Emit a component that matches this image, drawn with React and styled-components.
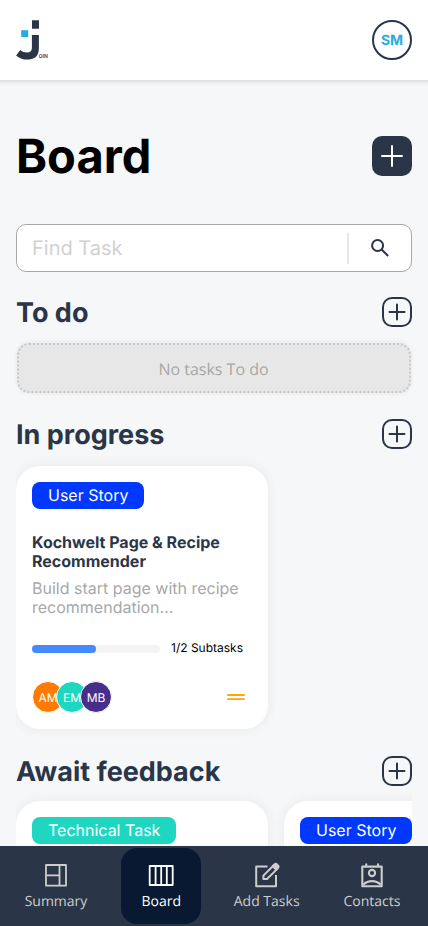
import React from "react";
import styled, { createGlobalStyle } from "styled-components";

const GlobalStyle = createGlobalStyle`
  *, *::before, *::after { box-sizing: border-box; }
  body { margin: 0; background: #f6f7f8; font-family: Inter, sans-serif; text-rendering: geometricPrecision; overflow: hidden; }
  h1, h2, h3, p { margin: 0; }
  button, input { font: inherit; text-rendering: inherit; }
`;

const navy = "#2a3647";

const Page = styled.div`
  display: flex;
  flex-direction: column;
  height: 100vh;
  background: #f6f7f8;
`;

const Header = styled.header`
  display: flex;
  flex: none;
  align-items: center;
  justify-content: space-between;
  height: 80px;
  padding: 0 16px;
  background: #fff;
  box-shadow: 0 0 4px 2px rgba(0, 0, 0, 0.12);
  z-index: 1;
`;

const Profile = styled.button`
  display: flex;
  align-items: center;
  justify-content: center;
  width: 40px;
  height: 40px;
  padding: 0;
  border: 2px solid ${navy};
  border-radius: 50%;
  background: #fff;
  color: #29abe2;
  font-size: 14px;
  font-weight: 700;
`;

const Main = styled.main`
  flex: 1;
  min-height: 0;
  padding: 48px 16px 0;
  overflow: hidden;
`;

const TitleRow = styled.div`
  display: flex;
  align-items: center;
  justify-content: space-between;
  height: 56px;
`;

const Title = styled.h1`
  padding-top: 2px;
  font-size: 47px;
  font-weight: 700;
  line-height: 56px;
`;

const AddButton = styled.button`
  display: flex;
  width: 40px;
  height: 40px;
  padding: 0;
  border: 0;
  border-radius: 10px;
  background: ${navy};
  color: #fff;
`;

const Search = styled.div`
  display: flex;
  align-items: center;
  height: 48px;
  margin-top: 40px;
  border: 1px solid #a8a8a8;
  border-radius: 10px;
  background: #fff;
`;

const SearchInput = styled.input`
  flex: 1;
  min-width: 0;
  height: 44px;
  padding: 0 15px;
  border: 0;
  outline: 0;
  background: transparent;
  font-size: 20px;
  &::placeholder { color: #d1d1d1; opacity: 1; }
`;

const SearchAction = styled.button`
  display: flex;
  align-items: center;
  justify-content: center;
  width: 64px;
  height: 31px;
  padding: 0;
  border: 0;
  border-left: 2px solid #e7e7e7;
  background: transparent;
`;

const ColumnHeader = styled.div`
  display: flex;
  align-items: center;
  justify-content: space-between;
  height: 30px;
  margin-top: ${({ $gap }) => $gap}px;
`;

const ColumnTitle = styled.h2`
  padding-top: 2px;
  color: ${navy};
  font-size: 27px;
  font-weight: 700;
  line-height: 34px;
`;

const ColumnAdd = styled.button`
  display: flex;
  width: 30px;
  height: 30px;
  padding: 0;
  border: 0;
  background: transparent;
`;

const Empty = styled.p`
  height: 50px;
  margin: 16px 1px 0;
  padding-right: 1px;
  border: 2px dotted #c9c9c9;
  border-radius: 12px;
  background: #e7e7e7;
  box-shadow: 0 0 4px rgba(0, 0, 0, 0.08);
  color: #a8a8a8;
  font: 16px/48px "Open Sans", sans-serif;
  text-align: center;
`;

const CardList = styled.div`
  display: flex;
  gap: 16px;
  padding: ${({ $top }) => $top}px 0 10px;
  overflow: hidden;
`;

const Card = styled.article`
  display: flex;
  flex: none;
  flex-direction: column;
  align-items: flex-start;
  width: 252px;
  height: 263px;
  padding: 16px;
  border-radius: 24px;
  background: #fff;
  box-shadow: 0 0 10px 3px rgba(0, 0, 0, 0.04);
`;

const Badge = styled.span`
  height: 27px;
  padding: 0 16px;
  border-radius: 8px;
  background: ${({ $color }) => $color};
  color: #fff;
  font-size: 16px;
  line-height: 27px;
  white-space: nowrap;
`;

const CardTitle = styled.h3`
  margin-top: 24px;
  color: ${navy};
  font-size: 16px;
  font-weight: 700;
  line-height: 19px;
`;

const Description = styled.p`
  margin-top: 8px;
  color: #a8a8a8;
  font-size: 16px;
  line-height: 19px;
`;

const Progress = styled.div`
  display: flex;
  align-items: center;
  gap: 11px;
  height: 16px;
  margin-top: 22px;
  font-size: 12px;
`;

const Track = styled.div`
  width: 128px;
  height: 8px;
  margin-top: 3px;
  border-radius: 8px;
  background: #f4f4f4;
`;

const Fill = styled.div`
  height: 8px;
  border-radius: 8px;
  background: #4589ff;
`;

const CardFooter = styled.div`
  display: flex;
  align-items: center;
  justify-content: space-between;
  width: 100%;
  margin-top: 26px;
  padding-right: 7px;
`;

const Avatars = styled.div`
  display: flex;
`;

const Avatar = styled.span`
  display: flex;
  align-items: center;
  justify-content: center;
  width: 32px;
  height: 32px;
  border: 1px solid #fff;
  border-radius: 50%;
  background: ${({ $color }) => $color};
  color: #fff;
  font-size: 12px;
  & + & { margin-left: -8px; }
`;

const Nav = styled.nav`
  display: flex;
  flex: none;
  align-items: center;
  justify-content: space-between;
  height: 80px;
  padding: 0 16px;
  background: ${navy};
  z-index: 1;
`;

const NavItem = styled.a`
  display: flex;
  flex-direction: column;
  align-items: center;
  width: 80px;
  height: 76px;
  padding-top: 12px;
  border-radius: 16px;
  background: ${({ $active }) => ($active ? "#091931" : "transparent")};
  color: ${({ $active }) => ($active ? "#fff" : "#cdcdcd")};
  font: 14px/19px "Open Sans", sans-serif;
  white-space: nowrap;
`;

const LogoSvg = styled.svg`
  overflow: visible;
`;

const Logo = () => (
  <LogoSvg width="32" height="40" viewBox="0 0 32 40" aria-label="Join">
    <path fill={navy} d="M16 .2h7v8.5h-7zM15.9 15h7v13.2c0 8.6-5.2 11.4-11.8 11.4-4.3 0-8-1.5-11-4.2L4.3 30c2.2 1.8 4.2 2.5 6.8 2.5 3.4 0 4.8-1.7 4.8-5z" />
    <path fill="#29abe2" d="M5.2 10.2h7V17h-7z" />
    <text x="22.8" y="38.2" fill={navy} fontFamily="Inter, sans-serif" fontSize="5.6" fontWeight="600" textLength="9" lengthAdjust="spacingAndGlyphs">OIN</text>
  </LogoSvg>
);

const PlusLarge = () => (
  <svg width="40" height="40" fill="none" stroke="currentColor" strokeWidth="2" strokeLinecap="round">
    <path d="M20 10v20M10 20h20" />
  </svg>
);

const PlusSmall = () => (
  <svg width="30" height="30" fill="none" stroke={navy} strokeWidth="2" strokeLinecap="round">
    <rect x="1" y="1" width="28" height="28" rx="9" />
    <path d="M15 7.5v15M7.5 15h15" />
  </svg>
);

const SearchIcon = () => (
  <svg width="18" height="18" fill="none" stroke={navy} strokeWidth="2">
    <circle cx="6.6" cy="6.5" r="5.5" />
    <path d="m10.6 10.5 6.5 6.5" />
  </svg>
);

const MediumPriority = () => (
  <svg width="18" height="8" stroke="#ffa800" strokeWidth="1.9" strokeLinecap="round">
    <path d="M1 2h16M1 6.1h16" />
  </svg>
);

const SummaryIcon = () => (
  <svg width="32" height="32" fill="none" stroke="currentColor" strokeWidth="1.8" strokeLinejoin="round">
    <path d="M6 5h20v20.7H6zM19.5 5v20.7M6 15.4h13.5" />
  </svg>
);

const BoardIcon = () => (
  <svg width="32" height="32" fill="none" stroke="currentColor" strokeWidth="1.8" strokeLinejoin="round">
    <path d="M4.7 6h23v19h-23zM10.6 6v19M16.2 6v19M21.8 6v19" />
  </svg>
);

const EditIcon = () => (
  <svg width="32" height="32" fill="none" stroke="currentColor" strokeWidth="2" strokeLinejoin="round">
    <path d="M16.5 6.6H5.2v19.6H25V15" />
    <path d="M12.4 19v-3.4L23 5l3.6 3.6L16 19z" />
    <path fill="currentColor" stroke="none" d="m20.3 6.3 3-3q1.4-1.2 2.8 0l2 2q1.2 1.4 0 2.7l-3 3z" />
  </svg>
);

const ContactsIcon = () => (
  <svg width="32" height="32" fill="none" stroke="currentColor" strokeWidth="2.1" strokeLinejoin="round">
    <path d="M6.3 6.6h19.4v19.6H6.3zM10.2 3.5v3M22 3.5v3M7.5 24.6c4.5-4.6 12.5-4.6 17 0" />
    <circle cx="16" cy="13" r="3.1" />
  </svg>
);

const Column = ({ title, gap, children }) => (
  <section>
    <ColumnHeader $gap={gap}>
      <ColumnTitle>{title}</ColumnTitle>
      <ColumnAdd aria-label={`Add task to ${title}`}><PlusSmall /></ColumnAdd>
    </ColumnHeader>
    {children}
  </section>
);

const people = [["AM", "#ff7a00"], ["EM", "#1fd7c1"], ["MB", "#462f8a"]];

const navigation = [
  ["Summary", SummaryIcon],
  ["Board", BoardIcon],
  ["Add Tasks", EditIcon],
  ["Contacts", ContactsIcon],
];

export default function App() {
  return (
    <Page>
      <GlobalStyle />
      <Header>
        <Logo />
        <Profile>SM</Profile>
      </Header>
      <Main>
        <TitleRow>
          <Title>Board</Title>
          <AddButton aria-label="Add task"><PlusLarge /></AddButton>
        </TitleRow>
        <Search>
          <SearchInput placeholder="Find Task" />
          <SearchAction aria-label="Search"><SearchIcon /></SearchAction>
        </Search>
        <Column title="To do" gap={25}>
          <Empty>No tasks To do</Empty>
        </Column>
        <Column title="In progress" gap={26}>
          <CardList $top={17}>
            <Card>
              <Badge $color="#0038ff">User Story</Badge>
              <CardTitle>Kochwelt Page &amp; Recipe Recommender</CardTitle>
              <Description>Build start page with recipe recommendation...</Description>
              <Progress>
                <Track><Fill style={{ width: `${(1 / 2) * 100}%` }} /></Track>
                1/2 Subtasks
              </Progress>
              <CardFooter>
                <Avatars>
                  {people.map(([initials, color]) => (
                    <Avatar key={initials} $color={color}>{initials}</Avatar>
                  ))}
                </Avatars>
                <MediumPriority />
              </CardFooter>
            </Card>
          </CardList>
        </Column>
        <Column title="Await feedback" gap={17}>
          <CardList $top={15}>
            <Card><Badge $color="#1fd7c1">Technical Task</Badge></Card>
            <Card><Badge $color="#0038ff">User Story</Badge></Card>
          </CardList>
        </Column>
      </Main>
      <Nav>
        {navigation.map(([label, Icon]) => (
          <NavItem key={label} $active={label === "Board"}>
            <Icon />
            {label}
          </NavItem>
        ))}
      </Nav>
    </Page>
  );
}
